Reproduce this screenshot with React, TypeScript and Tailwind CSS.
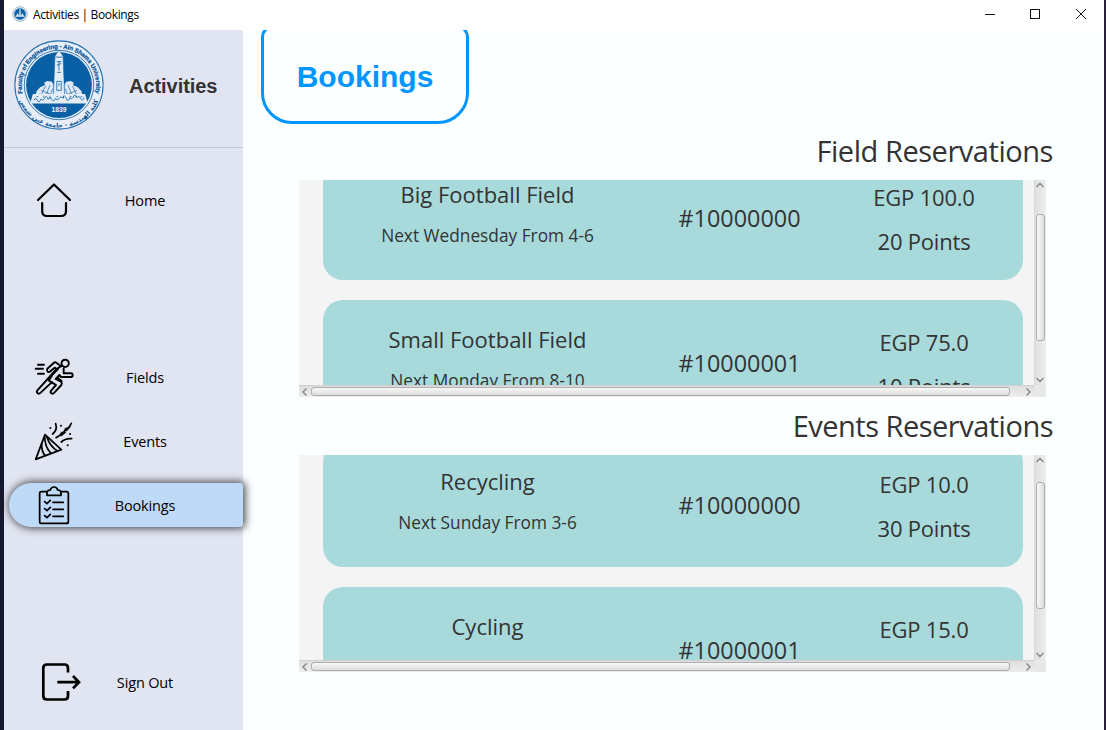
import type { ReactNode } from "react";

type Reservation = {
  title: string;
  when: string;
  code: string;
  price: string;
  points: string;
};

const fields: Reservation[] = [
  { title: "Big Football Field", when: "Next Wednesday From 4-6", code: "#10000000", price: "EGP 100.0", points: "20 Points" },
  { title: "Small Football Field", when: "Next Monday From 8-10", code: "#10000001", price: "EGP 75.0", points: "10 Points" },
];

const events: Reservation[] = [
  { title: "Recycling", when: "Next Sunday From 3-6", code: "#10000000", price: "EGP 10.0", points: "30 Points" },
  { title: "Cycling", when: "", code: "#10000001", price: "EGP 15.0", points: "" },
];

function Falcon() {
  return (
    <g>
      <path fill="#dfe8f4" d="M44 50 L42 46.500 L37 45.500 L33.500 47.500 L34.500 50 L29 52.500 L25 57 L24 61 L22 69 L44 69 Z" />
      <path
        d="M40 50 L33 68 M43 54 L38 68 M35 51 L28 66 M30 56 L40 60 M28 60 L39 64 M27 64.500 L38 67"
        stroke="#0a60a5"
        strokeWidth="0.7"
        fill="none"
      />
    </g>
  );
}

function Crest({ className }: { className: string }) {
  return (
    <svg viewBox="0 0 100 100" className={className}>
      <defs>
        <path id="crest-top" d="M9.8 60 A41.3 41.3 0 1 1 90.2 60" />
        <path id="crest-bottom" d="M4.5 62 A47 47 0 0 0 95.5 62" />
      </defs>
      <circle cx="50" cy="50" r="49" fill="#e8eef8" stroke="#2a72b0" strokeWidth="1.2" />
      <circle cx="50" cy="50" r="38.600" fill="none" stroke="#0a60a5" strokeWidth="0.9" />
      <circle cx="50" cy="50" r="36.600" fill="#0a60a5" />
      <text fontFamily="Liberation Sans, sans-serif" fontWeight="700" fontSize="6.700" fill="#0a5599" stroke="#0a5599" strokeWidth="0.3">
        <textPath href="#crest-top" startOffset="50%" textAnchor="middle">
          Faculty of Engineering - Ain Shams University
        </textPath>
      </text>
      <text fontFamily="DejaVu Sans, sans-serif" fontWeight="700" fontSize="7" fill="#0a5599">
        <textPath href="#crest-bottom" startOffset="50%" textAnchor="middle">
          كلية الهندسة - جامعة عين شمس
        </textPath>
      </text>
      <Falcon />
      <g transform="translate(100 0) scale(-1 1)">
        <Falcon />
      </g>
      <path d="M43.500 69 L45.500 18 L50 11 L54.500 18 L56.500 69 Z" fill="#e4ecf6" stroke="#0a60a5" strokeWidth="0.6" />
      <path d="M46 19 H54 M47.500 24 H52.500 M47.500 28 L52.500 26 M50 24 V34 M48 36 H52 M47.500 46 H52.500 V56 H47.500 Z M50 48 V51" stroke="#0a60a5" strokeWidth="0.9" fill="none" />
      <path d="M21 60 H79 L82 70.500 H18 Z" fill="#e4ecf6" />
      <path
        d="M22 67 q2 -4 4 0 t4 -1.500 q2 3 4 -1 t4 1.500 q2 -4 4 0 t4 -1 q2 3 4 0 t4 -1 q2 -4 4 1 t4 -1 q2 3 4 -1 t4 1 q2 -3 4 1 t4 -1 M25 63 h2 M33 62 v2 M40 62 v3 M47 63 h2 M55 62 v3 M62 63 h2 M69 62 v2 M74 63 h2"
        stroke="#0a60a5"
        strokeWidth="0.9"
        fill="none"
      />
      <text x="50" y="80" textAnchor="middle" fontFamily="Liberation Sans, sans-serif" fontWeight="700" fontSize="7.400" fill="#f4f8fc">
        1839
      </text>
    </svg>
  );
}

function AppMark() {
  return (
    <svg viewBox="0 0 16 16" className="size-4">
      <circle cx="8" cy="8" r="7.400" fill="#d7e2ee" stroke="#9bb3cc" strokeWidth="0.8" />
      <circle cx="8" cy="8" r="5.700" fill="#0a60a5" />
      <path d="M7.200 10 L7.500 3.200 L8 2.400 L8.500 3.200 L8.800 10 Z M3.600 10.800 L5.800 7 L7 10 H9 L10.200 7 L12.400 10.800 Z" fill="#e6eef7" />
    </svg>
  );
}

function HomeIcon() {
  return (
    <svg viewBox="34 180 40 40" className="size-10" fill="none" stroke="#000" strokeWidth="2.200" strokeLinecap="round" strokeLinejoin="round">
      <path d="M38 200 L54 184.500 L70 200" />
      <path d="M42.200 203 V211 Q42.200 216 47 216 H61 Q66 216 66 211 V203" />
    </svg>
  );
}

function RunnerIcon() {
  return (
    <svg viewBox="27 21 120 120" className="size-10" fill="none" stroke="#000" strokeWidth="5.800" strokeLinecap="round" strokeLinejoin="round">
      <circle cx="120.500" cy="40" r="11" />
      <path d="M39 44 H57 M32 56 H54 M39 71 H57" />
      <path d="M108 49 L95 39 Q90 35 86 39 L67 56 Q64 61 68 65 Q72 68 76 64 L89 53 L95 57 L37 121 Q33 126 38 130 Q42 133 47 128 L80 97" />
      <path d="M95 57 L110 47 M81 75 L99 57 M80 97 L71 91 L81 77" />
      <path d="M116 55 V70 H138 Q143 70 143 76 Q143 81 138 81 H108 L104 75 L92 87 L109 96 Q112 100 109 105 L88 128 Q82 134 78 129 Q75 126 79 121 L93 105 L80 97" />
      <path d="M102 76 L98 84 L110 93" />
    </svg>
  );
}

function PartyIcon() {
  return (
    <svg viewBox="29 212 120 120" className="size-10" fill="none" stroke="#000" strokeWidth="5.200" strokeLinecap="round" strokeLinejoin="round">
      <path d="M62 253 L34 327 L111 298 Z" />
      <path d="M52 280 Q51 302 62 315 M61 258 Q61 290 80 309 M68 261 Q76 287 99 302" />
      <path d="M94 220 Q100 238 85 251" />
      <path d="M95 262 L108 254 L111 248 L120 244 L124 235 L133 232 L141 219 M111 255 L122 246 M126 240 L137 228" strokeWidth="5" />
      <path d="M111 275 Q124 263 142 265" />
      <path d="M78 233 h.1 M110 226 h.1 M137 251 h.1 M130 285 h.1" strokeWidth="6" />
    </svg>
  );
}

function ClipboardIcon() {
  return (
    <svg viewBox="27 404 120 120" className="size-10" fill="none" stroke="#000" strokeWidth="5.200" strokeLinecap="round" strokeLinejoin="round">
      <path d="M65 424 H49 Q44 424 44 429 V514 Q44 519 49 519 H125 Q130 519 130 514 V429 Q130 424 125 424 H109" />
      <path d="M66 435 H108 V427 Q108 419 98 419 Q96 410 87 410 Q78 410 76 419 Q66 419 66 427 Z" />
      <path d="M59 454 L66 460 L76 450 M59 475 L66 481 L76 471 M59 496 L66 502 L76 492" />
      <path d="M84 456 H115 M84 477 H115 M84 498 H115" />
    </svg>
  );
}

function SignOutIcon() {
  return (
    <svg viewBox="41 662 40 40" className="size-10" fill="none" stroke="#000" strokeWidth="2.700">
      <path d="M68 672.500 V668 Q68 664.500 64.500 664.500 H47 Q43.300 664.500 43.300 668 V696 Q43.300 699.500 47 699.500 H64.500 Q68 699.500 68 696 V691" />
      <path d="M57.300 682.200 H79 M73 676 L79 682.200 L73 688.400" />
    </svg>
  );
}

function NavItem({ icon, label, active = false, shift = false }: { icon: ReactNode; label: string; active?: boolean; shift?: boolean }) {
  return (
    <div className="flex h-16 shrink-0 items-center pl-[5px]">
      <div
        className={
          active
            ? "flex h-11 w-[234px] items-center rounded-l-[22px] rounded-r-[3px] bg-[#bfdaf7] shadow-[1px_0_9px_1px_rgba(0,0,0,0.75)]"
            : "flex h-11 w-[234px] items-center"
        }
      >
        <span className={shift ? "flex w-[90px] shrink-0 justify-center pl-3.5" : "flex w-[90px] shrink-0 justify-center"}>{icon}</span>
        <span className="w-[92px] whitespace-nowrap pt-0.5 text-center text-[14.5px] leading-5 tracking-[-0.15px] text-black">{label}</span>
      </div>
    </div>
  );
}

function ReservationCard({ item }: { item: Reservation }) {
  return (
    <article className="grid h-[125px] w-[700px] shrink-0 grid-cols-[329px_175px_194px] whitespace-nowrap rounded-[20px] bg-[#a8dadc] text-center text-[#333]">
      <div className="pt-6">
        <h3 className="text-[22px] leading-[30px]">{item.title}</h3>
        <p className="mt-[15px] text-[17.3px] leading-6">{item.when}</p>
      </div>
      <div className="pt-[47px] text-[23.4px] leading-8">{item.code}</div>
      <div className="pt-[27px] text-[22px] leading-[30px] tracking-[-0.2px]">
        <p>{item.price}</p>
        <p className="mt-[14px]">{item.points}</p>
      </div>
    </article>
  );
}

function Arrow({ d }: { d: string }) {
  return (
    <svg viewBox="0 0 12 12" className="size-3 shrink-0" fill="none" stroke="#858585" strokeWidth="1.400">
      <path d={d} />
    </svg>
  );
}

function ScrollPanel({ items, listClass, thumbClass }: { items: Reservation[]; listClass: string; thumbClass: string }) {
  return (
    <div className="ml-14 grid h-[217px] w-[747px] shrink-0 grid-cols-[735px_12px] grid-rows-[205px_12px] bg-[#e8e8e8]">
      <div className="overflow-hidden bg-[#f4f4f4]">
        <div className={listClass}>
          {items.map((item) => (
            <ReservationCard key={item.title} item={item} />
          ))}
        </div>
      </div>
      <div className="flex flex-col justify-between border-l border-[#d9d9d9] bg-gradient-to-r from-[#e0e0e0] to-[#ededed]">
        <Arrow d="M1.500 7 L5 3.500 L8.500 7" />
        <div className={thumbClass} />
        <Arrow d="M1.500 5 L5 8.500 L8.500 5" />
      </div>
      <div className="flex items-center justify-between border-t border-[#d0d0d0] bg-gradient-to-b from-[#dedede] to-[#ededed]">
        <Arrow d="M7.500 2.500 L4 6 L7.500 9.500" />
        <div className="mr-auto h-[9px] w-[699px] rounded-[3px] border border-[#adadad] bg-gradient-to-b from-[#f8f8f8] to-[#dcdcdc]" />
        <Arrow d="M4.500 2.500 L8 6 L4.500 9.500" />
      </div>
    </div>
  );
}

export default function App() {
  return (
    <div className="flex h-[730px] w-[1106px] overflow-hidden border-l-4 border-r-2 border-l-[#15182f] border-r-[#28213a] bg-white font-['Open_Sans','Noto_Sans',sans-serif]">
      <div className="flex w-[1100px] flex-col">
        <header className="flex h-[30px] shrink-0 items-center bg-white pb-0.5 pl-2">
          <AppMark />
          <span className="ml-[5px] whitespace-nowrap pt-0.5 text-[12px] leading-4 tracking-[-0.36px] text-black">Activities | Bookings</span>
          <svg viewBox="0 0 104 12" className="ml-auto mr-[17px] h-3 w-[104px]" fill="none" stroke="#111" strokeWidth="1">
            <path d="M2 6.500 H12" />
            <rect x="47.500" y="1.500" width="9" height="9" />
            <path d="M93 1 L103 11 M103 1 L93 11" />
          </svg>
        </header>

        <div className="flex h-[700px]">
          <aside className="z-10 flex w-[239px] shrink-0 flex-col bg-[#e1e5f1]">
            <div className="flex h-[118px] shrink-0 items-start border-b border-[#c6c9d6] pl-2.5 pt-2.5">
              <Crest className="size-[90px] shrink-0" />
              <h2 className="ml-[25px] mt-[34px] font-['Liberation_Sans',sans-serif] text-[20px] font-bold leading-6 tracking-[-0.05px] text-[#333]">Activities</h2>
            </div>
            <nav className="flex flex-1 flex-col pt-5">
              <NavItem icon={<HomeIcon />} label="Home" />
              <div className="mt-[113px]">
                <NavItem icon={<RunnerIcon />} label="Fields" />
                <NavItem icon={<PartyIcon />} label="Events" />
                <NavItem icon={<ClipboardIcon />} label="Bookings" active />
              </div>
              <div className="mt-[113px]">
                <NavItem icon={<SignOutIcon />} label="Sign Out" shift />
              </div>
            </nav>
          </aside>

          <main className="flex w-[861px] flex-col overflow-hidden bg-[#fbffff]">
            <div className="-mt-[5px] ml-[18px] h-[99px] w-[208px] shrink-0 rounded-b-[31px] rounded-t-[12px] border-[3px] border-[#0096ff] pt-[31px] text-center">
              <h1 className="font-['Liberation_Sans',sans-serif] text-[30px] font-bold leading-9 text-[#0096ff]">Bookings</h1>
            </div>
            <h2 className="mr-[51px] mt-1 h-[52px] whitespace-nowrap pt-[3px] text-right text-[29px] leading-10 tracking-[-0.45px] text-[#333]">Field Reservations</h2>
            <ScrollPanel
              items={fields}
              listClass="-mt-[25px] flex flex-col gap-5 pl-6"
              thumbClass="mb-auto ml-px mt-[22px] h-[127px] w-[9px] rounded-[3px] border border-[#adadad] bg-gradient-to-r from-[#f8f8f8] to-[#dcdcdc]"
            />
            <h2 className="mr-[51px] mt-1.5 h-[52px] whitespace-nowrap pt-[3px] text-right text-[29px] leading-10 tracking-[-0.5px] text-[#333]">Events Reservations</h2>
            <ScrollPanel
              items={events}
              listClass="-mt-[13px] flex flex-col gap-5 pl-6"
              thumbClass="mb-auto ml-px mt-[15px] h-[127px] w-[9px] rounded-[3px] border border-[#adadad] bg-gradient-to-r from-[#f8f8f8] to-[#dcdcdc]"
            />
          </main>
        </div>
      </div>
    </div>
  );
}
